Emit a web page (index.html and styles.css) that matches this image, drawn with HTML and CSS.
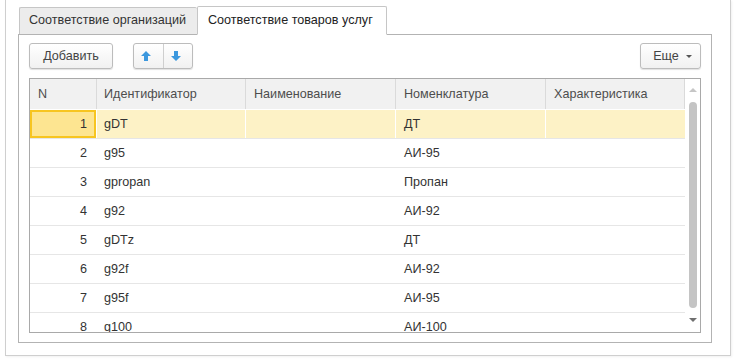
FILE: index.html
```html
<!DOCTYPE html>
<html lang="ru">
<head>
<meta charset="utf-8">
<link rel="stylesheet" href="styles.css">
</head>
<body>
<div class="frame">
  <div class="tabs">
    <div class="tab">Соответствие организаций</div>
    <div class="tab active">Соответствие товаров услуг</div>
  </div>
  <div class="panel">
    <div class="toolbar">
      <button class="btn add">Добавить</button>
      <div class="btn-group">
        <button class="btn icon"><svg width="10" height="10" viewBox="0 0 10 10"><path d="M5 0 L10 5 L7 5 L7 10 L3 10 L3 5 L0 5 Z" fill="#3c98de"/></svg></button>
        <button class="btn icon"><svg width="10" height="10" viewBox="0 0 10 10"><path d="M5 10 L10 5 L7 5 L7 0 L3 0 L3 5 L0 5 Z" fill="#3c98de"/></svg></button>
      </div>
      <div class="spacer"></div>
      <button class="btn more">Еще<span class="caret"></span></button>
    </div>
    <div class="table">
      <div class="grid">
        <div class="row head">
          <div class="cell">N</div>
          <div class="cell">Идентификатор</div>
          <div class="cell">Наименование</div>
          <div class="cell">Номенклатура</div>
          <div class="cell">Характеристика</div>
        </div>
        <div class="row current">
          <div class="cell num sel">1</div>
          <div class="cell id">gDT</div>
          <div class="cell"></div>
          <div class="cell">ДТ</div>
          <div class="cell"></div>
        </div>
        <div class="row">
          <div class="cell num">2</div><div class="cell id">g95</div><div class="cell"></div><div class="cell">АИ-95</div><div class="cell"></div>
        </div>
        <div class="row">
          <div class="cell num">3</div><div class="cell id">gpropan</div><div class="cell"></div><div class="cell">Пропан</div><div class="cell"></div>
        </div>
        <div class="row">
          <div class="cell num">4</div><div class="cell id">g92</div><div class="cell"></div><div class="cell">АИ-92</div><div class="cell"></div>
        </div>
        <div class="row">
          <div class="cell num">5</div><div class="cell id">gDTz</div><div class="cell"></div><div class="cell">ДТ</div><div class="cell"></div>
        </div>
        <div class="row">
          <div class="cell num">6</div><div class="cell id">g92f</div><div class="cell"></div><div class="cell">АИ-92</div><div class="cell"></div>
        </div>
        <div class="row">
          <div class="cell num">7</div><div class="cell id">g95f</div><div class="cell"></div><div class="cell">АИ-95</div><div class="cell"></div>
        </div>
        <div class="row">
          <div class="cell num">8</div><div class="cell id">g100</div><div class="cell"></div><div class="cell">АИ-100</div><div class="cell"></div>
        </div>
      </div>
      <div class="scrollbar">
        <span class="arr up"></span>
        <span class="thumb"></span>
        <span class="arr down"></span>
      </div>
    </div>
  </div>
</div>
</body>
</html>
```
FILE: styles.css
```css
* { box-sizing: border-box; }
html, body { margin: 0; padding: 0; background: #fff; }
body {
  font-family: "Liberation Sans", Arial, sans-serif;
  font-size: 12.6px;
  color: #333;
  width: 736px;
  height: 362px;
  overflow: hidden;
}
.frame {
  margin-left: 5px;
  width: 726px;
  height: 356px;
  border: 1px solid #cfcfcf;
  border-top: none;
  padding: 6px 0 0 12px;
  box-shadow: 1px 1px 2px rgba(0,0,0,0.06);
}
.tabs {
  display: flex;
  align-items: flex-end;
  margin-left: 1px;
  height: 28px;
}
.tab {
  height: 27px;
  width: 178px;
  border: 1px solid #c6c6c6;
  border-bottom: none;
  border-right: none;
  border-radius: 2px 2px 0 0;
  background: #ececec;
  color: #333;
  padding: 0 0 0 9px;
  line-height: 25px;
  white-space: nowrap;
}
.tab.active {
  position: relative;
  z-index: 1;
  width: 190px;
  height: 29px;
  margin-bottom: -1px;
  background: #fff;
  border: 1px solid #c6c6c6;
  border-bottom: 1px solid #fff;
  padding-left: 10px;
  line-height: 26px;
  color: #222;
}
.panel {
  width: 694px;
  height: 309px;
  border: 1px solid #b3b3b3;
  padding: 8px 10px 9px 10px;
}
.toolbar {
  display: flex;
  align-items: center;
  height: 26px;
}
.btn {
  font-family: inherit;
  font-size: 12.6px;
  color: #444;
  height: 26px;
  border: 1px solid #bcbcbc;
  border-radius: 3px;
  background: linear-gradient(#ffffff, #f1f1f1);
  box-shadow: 0 1px 1px rgba(0,0,0,0.12);
  padding: 0;
  margin: 0;
  display: flex;
  align-items: center;
  justify-content: center;
}
.add { width: 84px; }
.btn-group {
  display: flex;
  margin-left: 20px;
  border: 1px solid #bcbcbc;
  border-radius: 3px;
  box-shadow: 0 1px 1px rgba(0,0,0,0.12);
  background: linear-gradient(#ffffff, #f1f1f1);
}
.btn.icon {
  height: 24px;
  width: 29px;
  border: none;
  border-radius: 0;
  box-shadow: none;
  background: transparent;
  padding-right: 5px;
}
.btn.icon + .btn.icon {
  border-left: 1px solid #cfcfcf;
  width: 29px;
  padding-right: 4px;
}
.spacer { flex: 1; }
.more {
  width: 61px;
  padding-left: 4px;
}
.caret {
  display: inline-block;
  width: 0;
  height: 0;
  margin-left: 7px;
  border-left: 3px solid transparent;
  border-right: 3px solid transparent;
  border-top: 3px solid #555;
}
.table {
  margin-top: 9px;
  height: 255px;
  border: 1px solid #a9a9a9;
  display: flex;
  overflow: hidden;
}
.grid {
  width: 655px;
  overflow: hidden;
}
.row {
  display: grid;
  grid-template-columns: 67px 149px 150px 150px 139px;
  height: 29px;
  border-bottom: 1px solid #e6e6e6;
}
.row .cell {
  padding: 0 8px;
  display: flex;
  align-items: center;
  white-space: nowrap;
  border-right: 1px solid #fff;
  color: #333;
}
.row .cell:last-child { border-right: none; }
.row .cell.id { padding-left: 7px; }
.row .cell.num {
  justify-content: flex-end;
  padding-right: 9px;
}
.row.head {
  height: 31px;
  background: #f1f1f1;
  border-bottom: 1px solid #fff;
}
.row.head .cell {
  border-right: 1px solid #dadada;
  color: #4d4d4d;
}
.row.head .cell:first-child { padding-left: 8px; }
.row.head .cell:nth-child(2) { padding-left: 7px; }
.row.current { background: #fdf2c6; }
.row .cell.sel {
  background: #fde591;
  box-shadow: inset 0 0 0 2px #f7c520;
}
.scrollbar {
  flex: 1;
  display: flex;
  flex-direction: column;
  align-items: center;
  background: #fff;
  padding-left: 1px;
}
.arr {
  width: 0;
  height: 0;
  border-left: 4px solid transparent;
  border-right: 4px solid transparent;
}
.arr.up {
  margin-top: 9px;
  border-bottom: 4px solid #c6c6c6;
}
.thumb {
  margin-top: 10px;
  width: 8px;
  height: 206px;
  border-radius: 4px;
  background: #c4c4c4;
}
.arr.down {
  margin-top: 10px;
  border-top: 4px solid #6f6f6f;
}
```
